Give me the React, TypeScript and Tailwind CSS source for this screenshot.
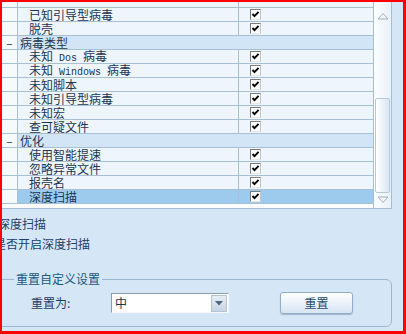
import React from 'react'

type Row = {
  kind: 'blank' | 'item' | 'group'
  label?: string
  selected?: boolean
}

const rows: Row[] = [
  { kind: 'blank' },
  { kind: 'item', label: '已知引导型病毒' },
  { kind: 'item', label: '脱壳' },
  { kind: 'group', label: '病毒类型' },
  { kind: 'item', label: '未知 Dos 病毒' },
  { kind: 'item', label: '未知 Windows 病毒' },
  { kind: 'item', label: '未知脚本' },
  { kind: 'item', label: '未知引导型病毒' },
  { kind: 'item', label: '未知宏' },
  { kind: 'item', label: '查可疑文件' },
  { kind: 'group', label: '优化' },
  { kind: 'item', label: '使用智能提速' },
  { kind: 'item', label: '忽略异常文件' },
  { kind: 'item', label: '报壳名' },
  { kind: 'item', label: '深度扫描', selected: true },
]

// latin words + spaces are narrow mono, like the old bitmap font
function renderLabel(s: string) {
  return (
    <span className="whitespace-pre">
      {s.split(/([A-Za-z ]+)/).map((part, i) =>
        /^[A-Za-z ]+$/.test(part) ? (
          <span key={i} className="font-['Liberation_Mono',monospace] text-[10px]">
            {part}
          </span>
        ) : (
          <React.Fragment key={i}>{part}</React.Fragment>
        )
      )}
    </span>
  )
}

function CheckBox() {
  return (
    <span className="w-[11px] h-[11px] bg-white border border-t-[#7a7a7a] border-l-[#7a7a7a] border-r-[#c4c4c4] border-b-[#e6e6e6] flex items-center justify-center">
      <svg width="9" height="9" viewBox="0 0 9 9">
        <polyline points="1.5,4 3.5,6.2 7.6,1.8" fill="none" stroke="#000" strokeWidth="1.9" />
      </svg>
    </span>
  )
}

function TreeRow({ row }: { row: Row }) {
  if (row.kind === 'group') {
    return (
      <div className="flex h-[14px] border-b border-[#a8bfd5] shrink-0 leading-[13px]">
        <div className="w-[16px] border-r border-[#a8bfd5] bg-[#f7fafd] flex items-center justify-center text-[#1b3553]">
          –
        </div>
        <div className="flex-1 bg-[#d2e5f7] pl-[2px] flex items-center text-[#1b3553]">{row.label}</div>
      </div>
    )
  }
  const bg = row.selected ? 'bg-[#9ccbee]' : 'bg-[#eef5fc]'
  return (
    <div className="flex h-[14px] border-b border-[#a8bfd5] shrink-0 leading-[13px]">
      <div className="w-[16px] border-r border-[#a8bfd5] bg-[#f7fafd]" />
      <div className={`w-[221px] border-r border-[#a8bfd5] pl-[11px] flex items-center text-[#1b3553] ${bg}`}>
        {row.label && renderLabel(row.label)}
      </div>
      <div className={`flex-1 pl-[11px] flex items-center ${bg}`}>{row.label && <CheckBox />}</div>
    </div>
  )
}

export default function App() {
  return (
    <div className="w-[406px] h-[334px] border-t-2 border-l-2 border-r-[3px] border-b-[3px] border-[#ff0000] bg-[#d5e7f7] overflow-hidden flex flex-col font-['Noto_Sans_CJK_SC',sans-serif] text-[12px] leading-[16px]">
      {/* list */}
      <div className="w-[390px] h-[207px] flex border-b border-[#a6bdd4] shrink-0">
        <div className="w-[371px] flex flex-col overflow-hidden bg-[#fbfdff]">
          <div className="-mt-[8px] flex flex-col">
            {rows.map((r, i) => (
              <TreeRow key={i} row={r} />
            ))}
          </div>
        </div>
        <div className="w-[19px] border-l border-r border-[#a6bdd4] bg-gradient-to-r from-[#fdfeff] to-[#e8f0f8] flex flex-col items-center">
          <svg className="mt-[10px]" width="12" height="8" viewBox="0 0 12 8">
            <polygon points="1,7 6,1.5 11,7" fill="none" stroke="#a3b0be" strokeWidth="1" />
          </svg>
          <div className="mt-[78px] w-[15px] h-[95px] rounded-[2px] border border-[#b5c9dc] bg-gradient-to-r from-[#ffffff] to-[#d9e6f2]" />
          <svg className="mt-[3px]" width="12" height="8" viewBox="0 0 12 8">
            <polygon points="1,1 6,6.5 11,1" fill="none" stroke="#a3b0be" strokeWidth="1" />
          </svg>
        </div>
      </div>

      {/* description */}
      <div className="mt-[7px] -ml-[4px] text-[#1d4068] whitespace-nowrap">深度扫描</div>
      <div className="mt-[4px] -ml-[8px] text-[#1d4068] whitespace-nowrap">是否开启深度扫描</div>

      {/* reset group box */}
      <div className="relative mt-[27px] -ml-[8px] w-[398px] h-[48px] border border-[#9db6ce] rounded-[6px] shrink-0">
        <span className="absolute top-[-9px] left-[19px] px-[2px] bg-[#d5e7f7] text-[#245680] whitespace-nowrap">
          重置自定义设置
        </span>
        <div className="mt-[12px] pl-[36px] flex items-center h-[22px]">
          <span className="w-[80px] text-[#1d4068] whitespace-nowrap">重置为:</span>
          <div className="w-[118px] h-[20px] bg-white border border-t-[#8b9cad] border-l-[#8b9cad] border-r-[#f4f8fc] border-b-[#f4f8fc] flex items-center">
            <span className="flex-1 pl-[3px] text-[#1b3553]">中</span>
            <div className="w-[16px] h-[17px] mr-[1px] bg-gradient-to-b from-[#e6eef6] to-[#c6d5e4] border border-[#b3c4d5] flex items-center justify-center">
              <svg width="8" height="5" viewBox="0 0 8 5">
                <polygon points="0,0 8,0 4,4.5" fill="#4e6580" />
              </svg>
            </div>
          </div>
          <button className="ml-[51px] w-[73px] h-[22px] rounded-[3px] border border-[#94adc6] bg-gradient-to-b from-[#ffffff] to-[#d6e4f2] shadow-[0_1px_1px_rgba(60,90,120,0.35)] text-[#1f4c73] flex items-center justify-center">
            重置
          </button>
        </div>
      </div>
    </div>
  )
}
